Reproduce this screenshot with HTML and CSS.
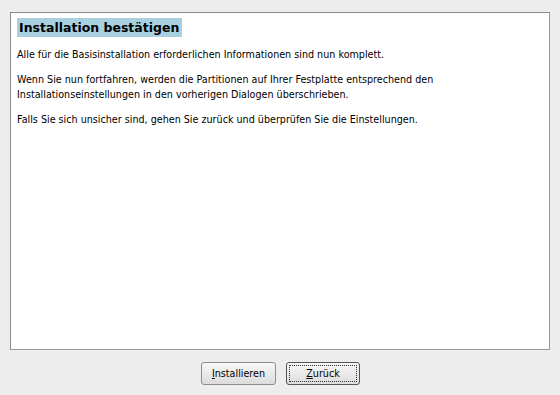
FILE: index.html
```html
<!DOCTYPE html>
<html lang="de">
<head>
 <meta charset="UTF-8">
 <title>Installation bestätigen</title>
 <link rel="stylesheet" href="styles.css">
</head>
<body>
 <div class="panel">
  <h1 class="title">Installation bestätigen</h1>
  <p>Alle für die Basisinstallation erforderlichen Informationen sind nun komplett.</p>
  <p>Wenn Sie nun fortfahren, werden die Partitionen auf Ihrer Festplatte entsprechend den<br>
   Installationseinstellungen in den vorherigen Dialogen überschrieben.</p>
  <p>Falls Sie sich unsicher sind, gehen Sie zurück und überprüfen Sie die Einstellungen.</p>
 </div>

 <div class="buttons">
  <button class="btn"><u>I</u>nstallieren</button>
  <button class="btn btn-focus"><span class="focus-ring"><u>Z</u>urück</span></button>
 </div>
</body>
</html>
```

FILE: styles.css
```css
:root {
 --window-bg: #ededed;
 --panel-border: #9a9a9a;
 --title-bg: #a8d0e0;
 --text-color: #000000;
}

html,
body {
 margin: 0;
 padding: 0;
 width: 560px;
 height: 395px;
 overflow: hidden;
}

body {
 background-color: var(--window-bg);
 font-family: "DejaVu Sans", sans-serif;
 color: var(--text-color);
 display: flex;
 flex-direction: column;
}

/* white content area with the sunken frame */
.panel {
 margin: 12px 10px 0 10px;
 height: 326px;
 width: 526px;
 background-color: #ffffff;
 border: 1px solid var(--panel-border);
 border-top-color: #8a8a8a;
 border-left-color: #8a8a8a;
 padding: 5px 6px;
}

.title {
 width: fit-content;
 margin: 0;
 padding: 2px 3px 1px 2px;
 background-color: var(--title-bg);
 font-size: 12.5px;
 font-weight: bold;
 line-height: 16px;
}

.panel p {
 margin: 10px 0 10px 0;
 font-size: 9.6px;
 line-height: 15px;
}

.buttons {
 display: flex;
 justify-content: center;
 gap: 10px;
 margin-top: 12px;
 padding-left: 1px;
}

.btn {
 height: 23px;
 width: 75px;
 font-family: "DejaVu Sans", sans-serif;
 font-size: 9.6px;
 color: #000000;
 background: linear-gradient(to bottom, #f8f8f8, #dcdcdc);
 border: 1px solid #8e8e8e;
 border-radius: 3px;
 padding: 0;
 display: flex;
 align-items: center;
 justify-content: center;
}

.btn-focus {
 width: 74px;
 border-color: #555555;
 padding: 2px;
}

.focus-ring {
 flex: 1;
 height: 100%;
 box-sizing: border-box;
 border: 1px dotted #333333;
 display: flex;
 align-items: center;
 justify-content: center;
}
```
